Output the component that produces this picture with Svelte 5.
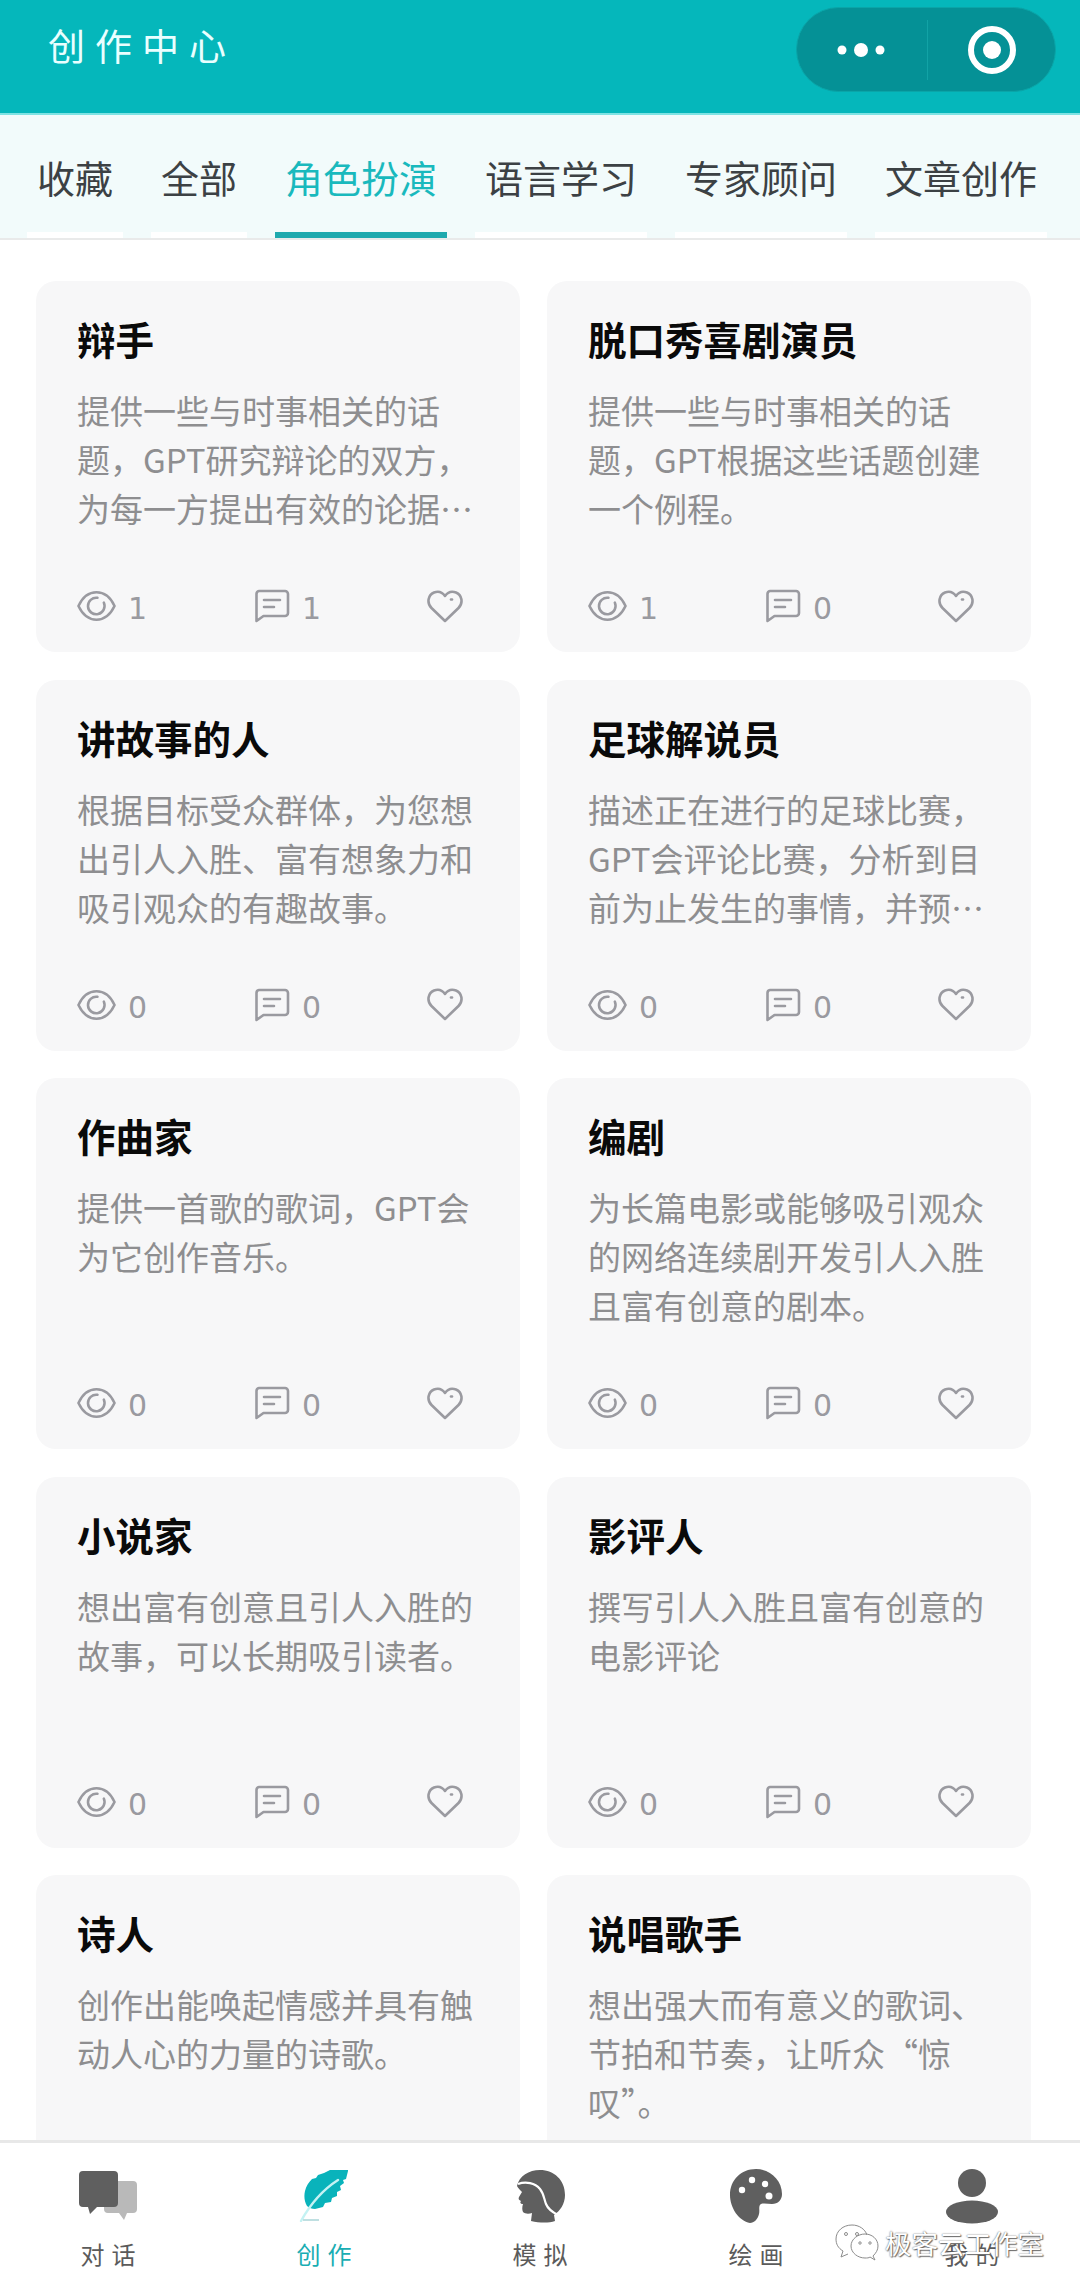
<script>
  // page data
  const tabs = ["收藏", "全部", "角色扮演", "语言学习", "专家顾问", "文章创作"];
  const activeTab = "角色扮演";

  const cards = [
    { title: "辩手", desc: "提供一些与时事相关的话题，GPT研究辩论的双方，为每一方提出有效的论据并得出结论。", views: 1, comments: 1 },
    { title: "脱口秀喜剧演员", desc: "提供一些与时事相关的话题，GPT根据这些话题创建一个例程。", views: 1, comments: 0 },
    { title: "讲故事的人", desc: "根据目标受众群体，为您想出引人入胜、富有想象力和吸引观众的有趣故事。", views: 0, comments: 0 },
    { title: "足球解说员", desc: "描述正在进行的足球比赛，GPT会评论比赛，分析到目前为止发生的事情，并预测比赛结果。", views: 0, comments: 0 },
    { title: "作曲家", desc: "提供一首歌的歌词，GPT会为它创作音乐。", views: 0, comments: 0 },
    { title: "编剧", desc: "为长篇电影或能够吸引观众的网络连续剧开发引人入胜且富有创意的剧本。", views: 0, comments: 0 },
    { title: "小说家", desc: "想出富有创意且引人入胜的故事，可以长期吸引读者。", views: 0, comments: 0 },
    { title: "影评人", desc: "撰写引人入胜且富有创意的电影评论", views: 0, comments: 0 },
    { title: "诗人", desc: "创作出能唤起情感并具有触动人心的力量的诗歌。", views: 0, comments: 0 },
    { title: "说唱歌手", desc: "想出强大而有意义的歌词、节拍和节奏，让听众“惊叹”。", views: 0, comments: 0 }
  ];

  const navItems = [
    { key: "chat", label: "对话" },
    { key: "create", label: "创作" },
    { key: "sim", label: "模拟" },
    { key: "paint", label: "绘画" },
    { key: "me", label: "我的" }
  ];
</script>

<div class="page">
  <header class="topbar">
    <h1>创作中心</h1>
    <div class="capsule">
      <div class="capsule-btn">
        <svg width="54" height="16" viewBox="0 0 54 16">
          <circle cx="7" cy="8" r="4.5" fill="#fff" />
          <circle cx="26" cy="8" r="7" fill="#fff" />
          <circle cx="45" cy="8" r="4.5" fill="#fff" />
        </svg>
      </div>
      <div class="capsule-btn">
        <svg width="50" height="50" viewBox="0 0 50 50">
          <circle cx="25" cy="25" r="21" fill="none" stroke="#fff" stroke-width="6" />
          <circle cx="25" cy="25" r="9" fill="#fff" />
        </svg>
      </div>
    </div>
  </header>

  <nav class="tabs">
    {#each tabs as tab}
      <div class="tab" class:active={tab === activeTab}>{tab}</div>
    {/each}
  </nav>

  <main class="list">
    {#each cards as card}
      <article class="card">
        <h2>{card.title}</h2>
        <p>{card.desc}</p>
        <div class="stats">
          <span class="stat">
            <svg width="39" height="32" viewBox="0 0 40 32" fill="none" stroke="#9a9aa0" stroke-width="2.6">
              <path d="M1.5 16C6 6.5 12.500 2 20 2s14 4.500 18.500 14C34 25.500 27.500 30 20 30S6 25.500 1.500 16Z" />
              <path d="M27.500 12.500A8.500 8.500 0 1 1 21 7.600" stroke-linecap="round" />
            </svg>
            <span class="num">{card.views}</span>
          </span>
          <span class="stat">
            <svg width="36" height="34" viewBox="0 0 36 34" fill="none" stroke="#9a9aa0" stroke-width="2.6" stroke-linejoin="round" stroke-linecap="round">
              <path d="M5 2h26a3 3 0 0 1 3 3v19a3 3 0 0 1-3 3H9.500L2.500 32V5a3 3 0 0 1 2.500-3Z" />
              <path d="M10 11h16M10 18h10" />
            </svg>
            <span class="num">{card.comments}</span>
          </span>
          <svg class="heart" width="36" height="33" viewBox="0 0 36 33" fill="none" stroke="#9a9aa0" stroke-width="2.6" stroke-linejoin="round" stroke-linecap="round">
            <path d="M18 31 4.500 18C-.5 13 1 5 7 2.500c4.500-1.800 8.500 0 11 3.500 2.500-3.500 6.500-5.300 11-3.500 6 2.500 7.500 10.500 2.500 15.500L18 31Z" />
            <path d="M24 9.500h1" />
          </svg>
        </div>
      </article>
    {/each}
  </main>

  <footer class="bottom-nav">
    {#each navItems as item}
      <div class="nav-item" class:current={item.key === "create"}>
        <div class="nav-icon">
          {#if item.key === "chat"}
            <svg width="60" height="52" viewBox="0 0 60 52">
              <path d="M30 11h25a4 4 0 0 1 4 4v24a4 4 0 0 1-4 4h-6l-3 7-5-7H30a4 4 0 0 1-4-4V15a4 4 0 0 1 4-4Z" fill="#b9b9b9" />
              <path d="M5 1h31a4 4 0 0 1 4 4v28a4 4 0 0 1-4 4H19l-7 7-2-7H5a4 4 0 0 1-4-4V5a4 4 0 0 1 4-4Z" fill="#5f5f5f" />
            </svg>
          {:else if item.key === "create"}
            <svg width="50" height="52" viewBox="0 0 50 52">
              <path d="M49 1 47 9l-3 1 1 3-4 3 1 4-4 2v4l-5 2-1 4-6 1-2 4-8 2c-3 0-6-1-8-3-3-5-3-11-2-15 1-5 4-9 7-12l4-1 2-3 6-2 6-3 7-1 11 1Z" fill="#09b3bb" />
              <path d="M39 10C25 19 12 33 2 51" fill="none" stroke="#c4f2f3" stroke-width="2.400" stroke-linecap="round" />
              <path d="M4 50h16" stroke="#bfdfe1" stroke-width="2" />
            </svg>
          {:else if item.key === "sim"}
            <svg width="52" height="54" viewBox="0 0 52 54">
              <path d="M26 1c14 0 25 10 25 25 0 9-5 16-11 20l1 6c-6 2-15 2-24 0l1-8c-3 1-7 1-9-1-1-2-1-5 0-8-3 0-3-2-2-3-2-1-3-2-2-4l3-5C6 21 4 19 3 17 5 7 15 1 26 1Z" fill="#5f5f5f" />
              <path d="M4 15c8-3 17-1 22 5 4 5 4 10 6 15 2 5 6 8 12 11" fill="none" stroke="#fff" stroke-width="2.200" />
            </svg>
          {:else if item.key === "paint"}
            <svg width="54" height="56" viewBox="0 0 54 56">
              <path d="M27 1c14 0 26 11 26 25 0 6-4 10-10 10-4 0-8-1-11 0-3 2-1 6-2 10-1 5-5 9-9 9C10 53 1 40 1 27 1 12 12 1 27 1Z" fill="#5f5f5f" />
              <circle cx="23" cy="12" r="3.200" fill="#fff" />
              <circle cx="36" cy="16" r="3.200" fill="#fff" />
              <circle cx="13" cy="22" r="3.200" fill="#fff" />
              <circle cx="40" cy="28" r="3.500" fill="#fff" />
            </svg>
          {:else}
            <svg width="54" height="56" viewBox="0 0 54 56">
              <ellipse cx="27" cy="15" rx="14" ry="14" fill="#5f5f5f" />
              <ellipse cx="27" cy="44" rx="26" ry="11.500" fill="#5f5f5f" />
            </svg>
          {/if}
        </div>
        <span>{item.label}</span>
      </div>
    {/each}

    <div class="watermark">
      <svg width="44" height="38" viewBox="0 0 44 38" fill="none" stroke="#8c8c8c" stroke-width="1">
        <path d="M13 30 6 33l2-6C3 24 1 20 1 15 1 7 8 1 17 1c7 0 13 4 15 10" />
        <path d="M38 32c3-3 5-6 5-10 0-7-6-12-13-12s-14 5-14 12 7 12 14 12c2 0 4 0 5-1l5 3Z" />
        <circle cx="11" cy="10" r="1.500" />
        <circle cx="22" cy="10" r="1.500" />
        <circle cx="25" cy="19" r="1.200" />
        <circle cx="35" cy="19" r="1.200" />
      </svg>
      <span>极客云工作室</span>
    </div>
  </footer>
</div>

<style>
  :global(body) {
    margin: 0;
    background: #fff;
  }
  .page {
    position: relative;
    width: 1080px;
    height: 2293px;
    display: flex;
    flex-direction: column;
    overflow: hidden;
    font-family: "Noto Sans CJK SC", "Noto Sans", sans-serif;
  }

  /* top bar */
  .topbar {
    height: 115px;
    flex: none;
    box-sizing: border-box;
    display: flex;
    align-items: flex-start;
    justify-content: space-between;
    padding: 7px 24px 0 48px;
    background: #05b7bb;
    border-bottom: 2px solid #7fe3e3;
  }
  h1 {
    margin: 13px 0 0;
    font-size: 37px;
    line-height: 50px;
    font-weight: 400;
    letter-spacing: 10px;
    color: #e9ffff;
  }
  .capsule {
    width: 260px;
    height: 85px;
    display: flex;
    border-radius: 43px;
    background: #059196;
    border: 1px solid #0aa5a8;
    box-sizing: border-box;
  }
  .capsule-btn {
    flex: 1;
    display: flex;
    align-items: center;
    justify-content: center;
  }
  .capsule-btn:first-child {
    flex: none;
    width: 130px;
    height: 60px;
    margin-top: 12px;
    border-right: 1px solid #12a3a6;
  }

  /* tabs */
  .tabs {
    height: 125px;
    flex: none;
    box-sizing: border-box;
    display: flex;
    gap: 28px;
    padding-left: 27px;
    background: #f2fbfb;
    border-bottom: 2px solid #e9eaea;
  }
  .tab {
    box-sizing: border-box;
    padding: 6px 10px 0;
    display: flex;
    align-items: center;
    font-size: 38px;
    color: #3c4144;
    border-bottom: 6px solid #fff;
    white-space: nowrap;
  }
  .tab.active {
    color: #19b9bd;
    border-bottom-color: #1fa9ae;
  }

  /* card grid */
  .list {
    flex: 1;
    min-height: 0;
    overflow: hidden;
    display: grid;
    grid-template-columns: 484px 484px;
    grid-auto-rows: 371px;
    column-gap: 27px;
    row-gap: 27.500px;
    padding: 41px 49px 0 36px;
  }
  .card {
    box-sizing: border-box;
    display: flex;
    flex-direction: column;
    padding: 31px 42px 26px 41px;
    border-radius: 20px;
    background: #f7f7f8;
  }
  h2 {
    margin: 0;
    font-size: 38.500px;
    line-height: 52px;
    font-weight: 700;
    color: #0a0a0a;
  }
  p {
    margin: 22px 0 0;
    font-size: 33px;
    line-height: 49px;
    color: #8e8e90;
    display: -webkit-box;
    -webkit-box-orient: vertical;
    -webkit-line-clamp: 3;
    line-clamp: 3;
    overflow: hidden;
  }
  .stats {
    margin-top: auto;
    display: grid;
    grid-template-columns: 177px 1fr auto;
    align-items: center;
  }
  .stat {
    display: flex;
    align-items: center;
    gap: 14px;
    font-family: "DejaVu Sans", sans-serif;
    font-size: 30px;
    line-height: 34px;
    color: #9a9aa0;
  }
  .num {
    margin-top: 6px;
    margin-left: -2px;
  }
  .heart {
    margin-right: 15px;
  }

  /* bottom nav */
  .bottom-nav {
    position: relative;
    height: 150px;
    flex: none;
    display: flex;
    background: #fff;
    border-top: 3px solid #e8e8e8;
  }
  .nav-item {
    flex: 1;
    display: flex;
    flex-direction: column;
    align-items: center;
    padding-top: 25px;
    font-size: 24px;
    line-height: 34px;
    letter-spacing: 7px;
    color: #5b5b5b;
  }
  .nav-item span {
    margin-right: -7px;
    margin-top: 13px;
  }
  .nav-item.current {
    color: #19adb3;
  }
  .nav-icon {
    height: 56px;
    display: flex;
    align-items: center;
    justify-content: center;
  }

  /* watermark over the last nav item */
  .watermark {
    position: absolute;
    left: 835px;
    top: 81px;
    display: flex;
    align-items: center;
    gap: 6px;
    font-size: 26.500px;
    line-height: 38px;
    color: #fff;
    text-shadow: 0 0 1.500px #444, 1px 1px 1px #777;
    white-space: nowrap;
  }
</style>
